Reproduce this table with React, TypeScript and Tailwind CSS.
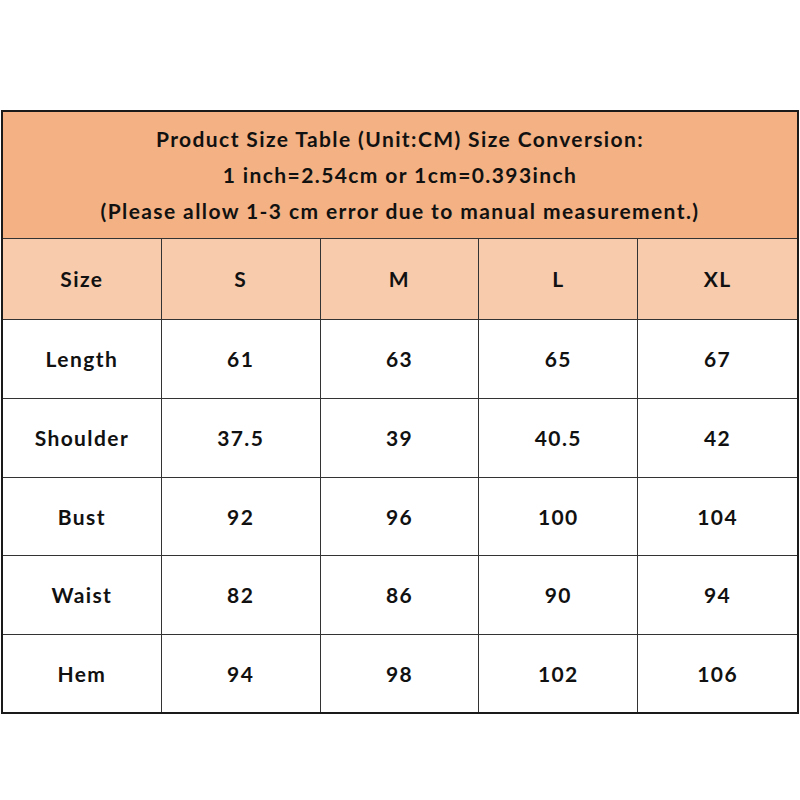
const COLS = ["S", "M", "L", "XL"];

const ROWS: { label: string; values: string[] }[] = [
  { label: "Length", values: ["61", "63", "65", "67"] },
  { label: "Shoulder", values: ["37.5", "39", "40.5", "42"] },
  { label: "Bust", values: ["92", "96", "100", "104"] },
  { label: "Waist", values: ["82", "86", "90", "94"] },
  { label: "Hem", values: ["94", "98", "102", "106"] },
];

function Cell({ children, last, bottom }: { children: React.ReactNode; last?: boolean; bottom?: boolean }) {
  return (
    <div
      className={`flex items-center justify-center ${last ? "" : "border-r border-[#333]"} ${
        bottom ? "" : "border-b border-[#333]"
      }`}
    >
      {children}
    </div>
  );
}

export default function App() {
  return (
    <div className="h-[800px] w-[800px] bg-white pt-[110px] font-['Lato','Liberation_Sans',sans-serif] font-bold text-[21px] tracking-[1.4px] text-[#111]">
      <div className="ml-[1px] w-[798px] border-2 border-[#1a1a1a]">
        <div className="flex h-[127px] flex-col items-center justify-center border-b border-[#333] bg-[#f4b183] leading-[36px]">
          <div>Product Size Table (Unit:CM) Size Conversion:</div>
          <div>1 inch=2.54cm or 1cm=0.393inch</div>
          <div>(Please allow 1-3 cm error due to manual measurement.)</div>
        </div>
        <div className="grid grid-cols-5 grid-rows-[81px_79px_79px_78px_79px_77px]">
          <div className="contents">
            <div className="flex items-center justify-center border-r border-b border-[#333] bg-[#f8cbad]">Size</div>
            {COLS.map((c, i) => (
              <div
                key={c}
                className={`flex items-center justify-center border-b border-[#333] bg-[#f8cbad] ${
                  i === COLS.length - 1 ? "" : "border-r"
                }`}
              >
                {c}
              </div>
            ))}
          </div>
          {ROWS.map((row, ri) => {
            const bottom = ri === ROWS.length - 1;
            return (
              <div key={row.label} className="contents">
                <Cell bottom={bottom}>{row.label}</Cell>
                {row.values.map((v, i) => (
                  <Cell key={i} bottom={bottom} last={i === row.values.length - 1}>
                    {v}
                  </Cell>
                ))}
              </div>
            );
          })}
        </div>
      </div>
    </div>
  );
}
